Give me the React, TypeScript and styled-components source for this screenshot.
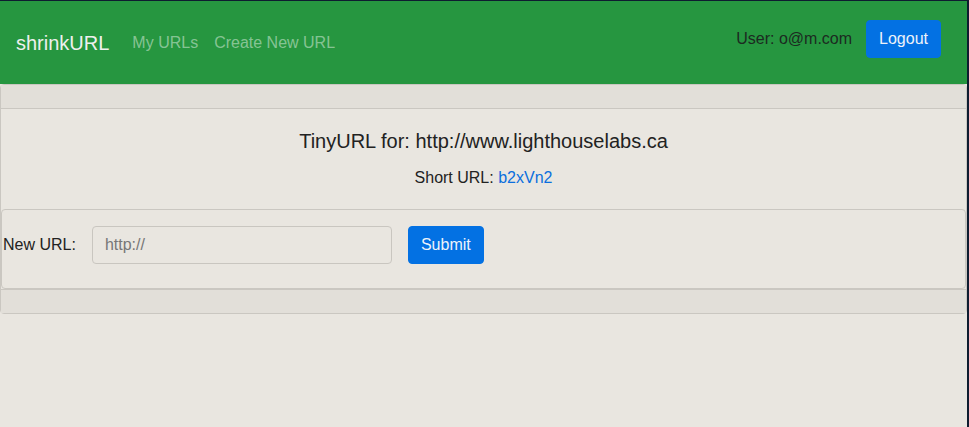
import React from "react";
import styled, { createGlobalStyle } from "styled-components";

const GlobalStyle = createGlobalStyle`
  html, body {
    margin: 0;
    padding: 0;
    background: #e9e6e0;
  }
  body {
    font-family: "Liberation Sans", Arial, sans-serif;
    font-size: 16px;
    line-height: 1.5;
    color: #212529;
  }
  * { box-sizing: border-box; }
`;

const Frame = styled.div`
  min-height: 100vh;
  border-top: 1px solid #0e1c30;
  border-right: 2px solid #0e1c30;
  background: #e9e6e0;
`;

const NavBar = styled.nav`
  height: 83px;
  background: #269640;
  display: flex;
  align-items: center;
  justify-content: space-between;
  padding: 0 26px 0 16px;
`;

const LeftGroup = styled.div`
  display: flex;
  align-items: center;
  margin-top: 1px;
`;

const Brand = styled.a`
  font-size: 20px;
  color: #eef0ee;
  margin-right: 15px;
  text-decoration: none;
`;

const NavLink = styled.a`
  color: rgba(255, 255, 255, 0.45);
  padding: 0 8px;
  text-decoration: none;
`;

const RightGroup = styled.div`
  display: flex;
  align-items: center;
  gap: 14px;
  margin-bottom: 8px;
`;

const UserText = styled.span`
  color: #1c2a21;
`;

const Button = styled.button`
  font-family: inherit;
  font-size: 16px;
  line-height: 24px;
  padding: 6px 12px;
  border: 1px solid #0371e3;
  background: #0371e3;
  color: #eef3fa;
  border-radius: 4px;
`;

const Card = styled.section`
  border: 1px solid #cac7c1;
  border-radius: 4px;
  background: #e9e6e0;
`;

const CardHeader = styled.div`
  height: 24px;
  background: #e2dfd9;
  border-bottom: 1px solid #cac7c1;
`;

const CardFooter = styled.div`
  height: 24px;
  background: #e2dfd9;
  border-top: 1px solid #cac7c1;
`;

const CardBody = styled.div`
  padding-top: 20px;
  text-align: center;
`;

const Title = styled.h3`
  margin: 0 0 13px;
  font-size: 20px;
  font-weight: 400;
  line-height: 24px;
  color: #222;
`;

const ShortLine = styled.p`
  margin: 0 0 19px;
  font-size: 16px;
  line-height: 24px;
  color: #222;
`;

const ShortLink = styled.a`
  color: #0b6fde;
  text-decoration: none;
`;

const FormCard = styled.form`
  border: 1px solid #cac7c1;
  border-radius: 4px;
  padding: 16px 0 24px 1px;
  display: flex;
  align-items: center;
  text-align: left;
`;

const Label = styled.label`
  color: #222;
  margin-right: 16px;
`;

const Input = styled.input`
  width: 300px;
  height: 38px;
  border: 1px solid #c9c6c0;
  border-radius: 4px;
  background: #e9e6e0;
  padding: 0 12px;
  font-family: inherit;
  font-size: 16px;
  color: #495057;
  margin-right: 16px;
  &::placeholder { color: #777; }
`;

export default function App() {
  return (
    <>
      <GlobalStyle />
      <Frame>
        <NavBar>
          <LeftGroup>
            <Brand>shrinkURL</Brand>
            <NavLink>My URLs</NavLink>
            <NavLink>Create New URL</NavLink>
          </LeftGroup>
          <RightGroup>
            <UserText>User: o@m.com</UserText>
            <Button type="button">Logout</Button>
          </RightGroup>
        </NavBar>
        <Card>
          <CardHeader />
          <CardBody>
            <Title>TinyURL for: http://www.lighthouselabs.ca</Title>
            <ShortLine>
              Short URL: <ShortLink>b2xVn2</ShortLink>
            </ShortLine>
            <FormCard onSubmit={(e) => e.preventDefault()}>
              <Label>New URL:</Label>
              <Input placeholder="http://" />
              <Button type="submit">Submit</Button>
            </FormCard>
          </CardBody>
          <CardFooter />
        </Card>
      </Frame>
    </>
  );
}
